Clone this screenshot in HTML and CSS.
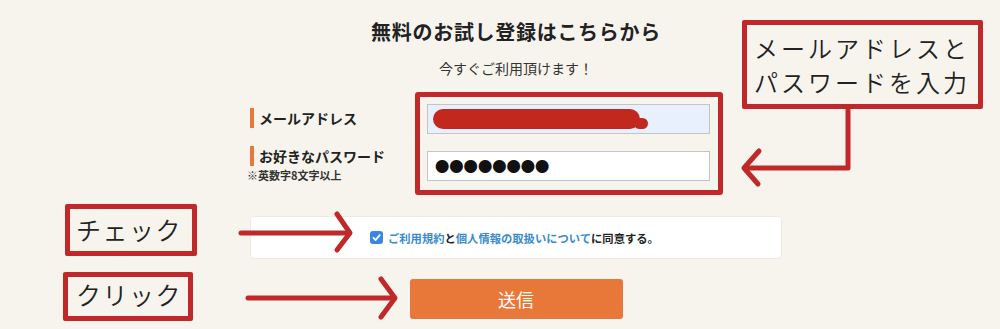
FILE: index.html
```html
<!DOCTYPE html>
<html>

<head>
    <meta charset="UTF-8">
    <title>無料のお試し登録</title>
    <link rel="stylesheet" href="styles.css">
</head>

<body>
    <div class="page">
        <main class="form">
            <h1 class="title">無料のお試し登録はこちらから</h1>
            <p class="lead">今すぐご利用頂けます！</p>
            <div class="fields">
                <div class="labels">
                    <div class="label">メールアドレス</div>
                    <div class="label label-pass">お好きなパスワード</div>
                    <div class="note">※英数字8文字以上</div>
                </div>
                <div class="mark-box">
                    <div class="input input-mail"><span class="scribble"></span></div>
                    <div class="input input-pass">●●●●●●●●</div>
                </div>
            </div>
            <div class="agree">
                <svg class="check" viewBox="0 0 13 13" width="13" height="13">
                    <rect x="0" y="0" width="13" height="13" rx="3" fill="#3a86e2" />
                    <path d="M3.4 6.8 L5.6 9 L9.7 4.2" fill="none" stroke="#fff" stroke-width="1.8"
                        stroke-linecap="round" stroke-linejoin="round" />
                </svg>
                <span><a href="#">ご利用規約</a>と<a href="#">個人情報の取扱いについて</a>に同意する。</span>
            </div>
            <button class="submit">送信</button>
        </main>

        <div class="callout callout-input">
            <div class="callout-line">メールアドレスと</div>
            <div class="callout-line">パスワードを入力</div>
        </div>
        <div class="callout callout-check">チェック</div>
        <div class="callout callout-click">クリック</div>

        <svg class="arrows" viewBox="0 0 1000 329" width="1000" height="329">
            <path d="M848 109 V168 H745" />
            <path d="M759 151 L744 168 L758 184" />
            <path d="M241 233 H349" />
            <path d="M337 214 L350 233 L337 250" />
            <path d="M248 298 H394" />
            <path d="M381 279 L395 298 L381 317" />
        </svg>
    </div>
</body>

</html>
```

FILE: styles.css
```css
body {
    margin: 0;
    background: #f7f4ee;
    font-family: "Noto Sans CJK JP", "Noto Sans", sans-serif;
    color: #222;
}

.page {
    position: relative;
    width: 1000px;
    height: 329px;
    overflow: hidden;
}

.form {
    margin-left: 250px;
    width: 532px;
    padding-top: 18px;
}

.title {
    margin: 0;
    font-size: 20px;
    line-height: 28px;
    letter-spacing: 0.7px;
    font-weight: 700;
    text-align: center;
}

.lead {
    margin: 12px 0 0;
    font-size: 14px;
    line-height: 20px;
    text-align: center;
    color: #333;
}

.fields {
    display: flex;
    margin-top: 14px;
}

.labels {
    width: 165px;
    padding-top: 16px;
}

.label {
    font-size: 14px;
    line-height: 20px;
    font-weight: 700;
    border-left: 4px solid #e8773a;
    padding-left: 5px;
}

.label-pass {
    margin-top: 18px;
}

.note {
    margin: 2px 0 0 -3px;
    font-size: 11px;
    line-height: 14px;
    font-weight: 700;
    color: #333;
}

.mark-box {
    width: 308px;
    box-sizing: border-box;
    border: 5px solid #c0282a;
    border-radius: 3px;
    padding: 7px 8px 9px 7px;
    display: flex;
    flex-direction: column;
    gap: 17px;
}

.input {
    height: 30px;
    box-sizing: border-box;
    border: 1px solid #c4c4c4;
    background: #fff;
    display: flex;
    align-items: center;
    padding-left: 7px;
}

.input-mail {
    background: #e8f0fe;
    padding-left: 5px;
}

.scribble {
    position: relative;
    width: 207px;
    height: 20px;
    border-radius: 10px;
    background: #c3281f;
}

.scribble::after {
    content: "";
    position: absolute;
    right: -8px;
    bottom: 0;
    width: 14px;
    height: 11px;
    border-radius: 6px;
    background: #c3281f;
}

.input-pass {
    font-size: 14.3px;
    line-height: 1;
    color: #111;
}

.agree {
    margin-top: 21px;
    height: 43px;
    box-sizing: border-box;
    background: #fff;
    border: 1px solid #efebe4;
    border-radius: 4px;
    display: flex;
    align-items: center;
    gap: 5px;
    padding-left: 119px;
    font-size: 11.3px;
    font-weight: 700;
}

.agree a {
    color: #3a8bcd;
    text-decoration: none;
}

.submit {
    display: block;
    margin: 20px auto 0;
    width: 213px;
    height: 40px;
    border: none;
    border-radius: 3px;
    background: #e8773a;
    color: #fff;
    font-family: "Noto Sans CJK JP", sans-serif;
    font-size: 18px;
}

.callout {
    position: absolute;
    box-sizing: border-box;
    border: 5px solid #c0282a;
    border-radius: 2px;
    color: #222;
    font-weight: 350;
    display: flex;
    align-items: center;
}

.callout-input {
    left: 742px;
    top: 20px;
    width: 241px;
    height: 89px;
    padding: 0 0 0 7px;
    flex-direction: column;
    align-items: flex-start;
    justify-content: center;
    font-size: 24px;
    letter-spacing: 3px;
}

.callout-line {
    height: 34px;
    line-height: 34px;
}

.callout-check {
    left: 65px;
    top: 204px;
    width: 132px;
    height: 52px;
    padding: 0 0 3px 6px;
    font-size: 25px;
    letter-spacing: 1.5px;
}

.callout-click {
    left: 63px;
    top: 272px;
    width: 130px;
    height: 49px;
    padding: 0 0 5px 8px;
    font-size: 25px;
    letter-spacing: 1.5px;
}

.arrows {
    position: absolute;
    top: 0;
    left: 0;
    pointer-events: none;
}

.arrows path {
    fill: none;
    stroke: #c0282a;
    stroke-width: 5;
    stroke-linecap: round;
    stroke-linejoin: round;
}
```
